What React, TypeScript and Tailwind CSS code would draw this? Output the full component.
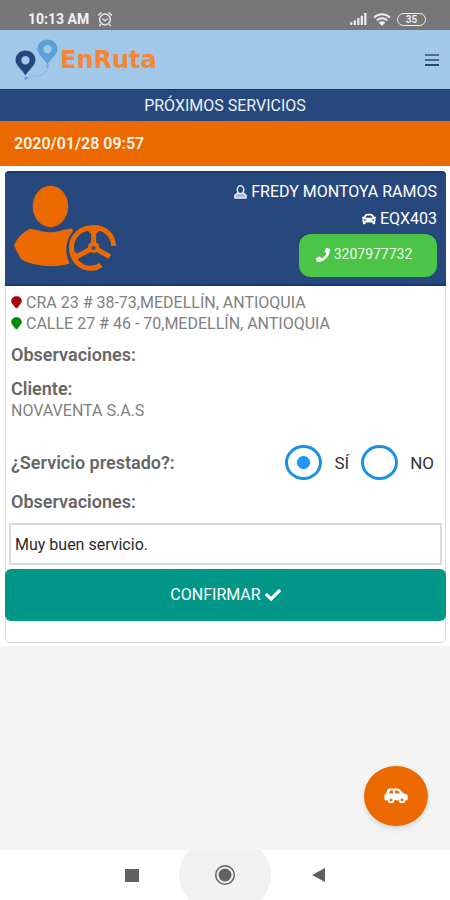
import { useState } from 'react';
import { FaCar, FaCheck, FaPhone } from 'react-icons/fa';

function AlarmIcon() {
  return (
    <svg viewBox="0 0 16 16" className="h-4 w-4" fill="none" stroke="#e8e8e8" strokeWidth="1.5" strokeLinecap="round">
      <circle cx="8" cy="8.5" r="5.4" />
      <path d="M1.5 4 4 1.8M14.5 4 12 1.8M3.6 13.8l-1 1M12.4 13.8l1 1" />
      <path d="m5.8 8 2.2 1.8L10.6 8" strokeWidth="1.2" />
    </svg>
  );
}

function SignalIcon() {
  return (
    <svg viewBox="0 0 18 13" className="h-3 w-[17px]" fill="#ececec">
      <rect x="0" y="10" width="2.4" height="3" />
      <rect x="3.8" y="8" width="2.4" height="5" />
      <rect x="7.6" y="5.5" width="2.4" height="7.5" />
      <rect x="11.4" y="3" width="2.4" height="10" />
      <rect x="15.2" y="0" width="2.4" height="13" />
    </svg>
  );
}

function WifiIcon() {
  return (
    <svg viewBox="0 0 18 13" className="h-[13px] w-[18px]" fill="none" stroke="#ececec" strokeWidth="2">
      <path d="M1 4.6a11.5 11.5 0 0 1 16 0" />
      <path d="M3.8 7.4a7.4 7.4 0 0 1 10.4 0" />
      <path d="M9 13 5.6 9.6a4.8 4.8 0 0 1 6.8 0z" fill="#ececec" stroke="none" />
    </svg>
  );
}

function StatusBar() {
  return (
    <div className="flex h-[30px] items-center justify-between bg-[#777777] pt-2 pr-6 pl-7 text-white">
      <div className="flex items-center gap-2">
        <span className="text-sm font-bold text-[#f2f2f2]">10:13 AM</span>
        <AlarmIcon />
      </div>
      <div className="flex items-center gap-[6px]">
        <SignalIcon />
        <WifiIcon />
        <span className="flex h-[13px] w-[29px] items-center justify-center rounded-full border border-[#f0f0f0] text-[10px] font-bold text-[#ececec]">
          35
        </span>
      </div>
    </div>
  );
}

function LogoPins() {
  return (
    <svg viewBox="0 0 44 42" className="h-[42px] w-[46px]">
      <path
        fillRule="evenodd"
        fill="#25467b"
        d="M10.5 11.5C4.9 11.5.5 15.7.5 21c0 5.4 6.5 9.5 10 15.5C14 30.5 20.5 26.4 20.5 21c0-5.3-4.4-9.5-10-9.5zm0 5.5a4.2 4.2 0 1 1 0 8.4 4.2 4.2 0 0 1 0-8.4z"
      />
      <path
        fillRule="evenodd"
        fill="#5ba1d7"
        d="M32.5.5c-5.6 0-10 4.2-10 9.5 0 5.4 6.5 9.5 10 15.5 3.5-6 10-10.1 10-15.5 0-5.3-4.4-9.5-10-9.5zm0 5.5a4.2 4.2 0 1 1 0 8.4 4.2 4.2 0 0 1 0-8.4z"
      />
      <path d="M11 39c6-2 11-2 15-3s7-4 6.500-9" fill="none" stroke="#7fa9d2" strokeWidth="1" strokeDasharray="2 1.5" />
      <circle cx="11" cy="39.3" r="1.6" fill="#6f9bc9" />
      <circle cx="32.5" cy="27" r="1.4" fill="#6fabdc" />
    </svg>
  );
}

function DriverIcon() {
  return (
    <svg viewBox="40 76 308 260" className="h-[87px] w-[103px]" fill="#ec6900">
      <ellipse cx="149" cy="140" rx="53" ry="62" />
      <path d="M40 256c10-22 30-42 50-49 20 3 35 11 62 10 25-1 40-10 63-11l1 9c-22 26-26 66-9 95-26 10-70 11-101 4-20-4-34-9-44-16-9-12-15-27-22-42z" />
      <g fill="none" stroke="#ec6900">
        <path d="M338 258c-1-33-27-55-60-55-38 0-66 25-66 60 0 37 26 62 57 62 12 0 22-3 31-10" strokeWidth="15" />
        <path d="M278 208v50M272 266l-46 25M284 266l42 24" strokeWidth="15" />
        <path d="M260 207l18 15 18-15M221 278l10 18M325 282l-5 12" strokeWidth="9" />
      </g>
      <circle cx="278" cy="262" r="17" />
      <circle cx="278" cy="264" r="6" fill="#27487c" />
      <circle cx="278" cy="264" r="2" />
    </svg>
  );
}

function UserOutlineIcon() {
  return (
    <svg viewBox="0 0 13 14" className="h-[14px] w-[13px]" fill="none" stroke="#e6ebf3" strokeWidth="1.5" strokeLinejoin="round">
      <path d="M4 7.8.9 10.3V13h11.2v-2.7L9 7.8z" fill="#a9b7cf" />
      <ellipse cx="6.5" cy="4.7" rx="3.2" ry="3.9" fill="#27487c" />
    </svg>
  );
}

function MarkerIcon({ color }: { color: string }) {
  return (
    <svg viewBox="0 0 11 13" className="h-[13px] w-[11px] shrink-0" fill={color}>
      <path d="M5.5.3C2.4.3.2 2.4.2 5c0 2.400 2.600 3.900 3.900 6.300.5 1.400 2.300 1.400 2.800 0C8.200 8.900 10.800 7.400 10.800 5 10.800 2.400 8.600.3 5.500.3z" />
    </svg>
  );
}

function CarIcon() {
  return (
    <svg viewBox="0 0 24 16" className="h-4 w-6">
      <path
        fillRule="evenodd"
        fill="#ffffff"
        d="M5.5.5h8c1 0 1.700.3 2.400 1L19.500 5.500l2.200.6c1.300.4 2 1.200 2 2.500v2.600c0 .6-.4 1-1 1h-1.300a3.400 3.400 0 0 1-6.700 0H10.300a3.400 3.400 0 0 1-6.700 0H1.500c-.6 0-1-.4-1-1V7.500c0-1 .6-1.800 1.500-2.100L3.400 2C3.800 1 4.500.5 5.500.5zM6.300 2.500 5 5.500h4v-3zm4.700 0v3h5.200l-2.500-3z"
      />
      <circle cx="7" cy="12" r="3.2" fill="#ffffff" />
      <circle cx="18" cy="12" r="3.2" fill="#ffffff" />
      <circle cx="7" cy="12" r="1.5" fill="#ec6900" />
      <circle cx="18" cy="12" r="1.5" fill="#ec6900" />
    </svg>
  );
}

const answers = ['SÍ', 'NO'];

const places = [
  { color: '#a80710', text: 'CRA 23 # 38-73,MEDELLÍN, ANTIOQUIA' },
  { color: '#078a0b', text: 'CALLE 27 # 46 - 70,MEDELLÍN, ANTIOQUIA' },
];

function ServiceCard() {
  const [answer, setAnswer] = useState('SÍ');
  const [notes, setNotes] = useState('Muy buen servicio.');

  return (
    <section className="rounded border border-[#dcdcdc] bg-white pb-[21px]">
      <div className="-mx-px -mt-px flex items-start justify-between rounded-t border-t-2 border-b-2 border-[#173a70] bg-[#27487c] px-[9px] pt-[7px] pb-[7px] text-white">
        <div className="pt-[5px]">
          <DriverIcon />
        </div>
        <div className="flex flex-col items-end">
          <p className="flex items-center gap-1 text-base leading-6">
            <UserOutlineIcon />
            FREDY MONTOYA RAMOS
          </p>
          <p className="flex items-center gap-1 pt-[3px] text-base leading-6">
            <FaCar className="h-[14px] w-[14px]" />
            EQX403
          </p>
          <a
            href="tel:3207977732"
            className="mt-[3px] flex h-[43px] w-[138px] items-start justify-center gap-1 rounded-xl bg-[#4bc447] pt-[10px] pr-2 text-sm text-[#e9f9e8]"
          >
            <FaPhone className="mt-1 h-[14px] w-[14px] text-white" />
            3207977732
          </a>
        </div>
      </div>

      <div className="px-[5px] pt-[6px] text-[#666666]">
        {places.map((p) => (
          <p key={p.color} className="flex items-center gap-1 text-base leading-[21px] text-[#808080]">
            <MarkerIcon color={p.color} />
            {p.text}
          </p>
        ))}
        <h2 className="pt-[10px] text-lg leading-[22px] font-semibold">Observaciones:</h2>
        <h2 className="pt-3 text-lg leading-[22px] font-semibold">Cliente:</h2>
        <p className="text-base leading-[21px] text-[#808080]">NOVAVENTA S.A.S</p>

        <div role="radiogroup" aria-labelledby="served" className="flex items-center justify-between pt-6">
          <span id="served" className="text-lg font-semibold">
            ¿Servicio prestado?:
          </span>
          <div className="flex items-center gap-3 pr-[6px]">
            {answers.map((a) => (
              <label key={a} className="flex items-center gap-3 text-[17px] leading-6 text-[#333333]">
                <input
                  type="radio"
                  name="prestado"
                  value={a}
                  checked={answer === a}
                  onChange={() => setAnswer(a)}
                  className="h-[35px] w-[37px] appearance-none rounded-[50%] border-3 border-[#1b8fe0] bg-white bg-[radial-gradient(circle,#2196f3_6px,transparent_7px)] not-checked:bg-none"
                />
                {a}
              </label>
            ))}
          </div>
        </div>

        <label htmlFor="notes" className="block pt-3 text-lg leading-[20px] font-semibold">
          Observaciones:
        </label>
      </div>
      <div className="px-[3px] pt-[11px]">
        <input
          id="notes"
          type="text"
          value={notes}
          onChange={(e) => setNotes(e.target.value)}
          className="h-[42px] w-full border-2 border-[#dadada] bg-white px-1 text-base text-[#2a2a2a]"
        />
      </div>
      <button
        type="button"
        className="mt-1 -mr-px -ml-px flex h-[52px] w-[calc(100%+2px)] items-center justify-center gap-1 rounded-md bg-[#009688] text-base text-white"
      >
        CONFIRMAR
        <FaCheck className="h-4 w-4" />
      </button>
    </section>
  );
}

function NavBar() {
  return (
    <nav className="flex h-[50px] items-center justify-center overflow-hidden bg-white">
      <button type="button" aria-label="Recientes" className="flex h-full w-[94px] items-center justify-center">
        <span className="h-[13px] w-[14px] bg-[#616161]" />
      </button>
      <button
        type="button"
        aria-label="Inicio"
        className="flex h-20 w-[92px] shrink-0 items-center justify-center rounded-[50%] bg-[#f1f1f1]"
      >
        <svg viewBox="0 0 22 22" className="h-[22px] w-[22px]">
          <circle cx="11" cy="11" r="9.3" fill="none" stroke="#616161" strokeWidth="1.5" />
          <circle cx="11" cy="11" r="6.5" fill="#616161" />
        </svg>
      </button>
      <button type="button" aria-label="Atrás" className="flex h-full w-[94px] items-center justify-center">
        <svg viewBox="0 0 13 14" className="h-[14px] w-[13px]" fill="#616161">
          <path d="M13 0v14L0 7z" />
        </svg>
      </button>
    </nav>
  );
}

export default function App() {
  return (
    <div className="flex min-h-screen flex-col bg-[#f4f4f4] font-['Roboto',sans-serif]">
      <StatusBar />
      <header className="flex h-[59px] items-center justify-between bg-[#a2c8e9] pr-[11px] pl-[14px]">
        <div className="flex items-center">
          <LogoPins />
          <span className="font-['DejaVu_Sans',sans-serif] text-2xl font-bold text-[#f58634]">EnRuta</span>
        </div>
        <button type="button" aria-label="Menú" className="flex w-[14px] flex-col gap-[3px]">
          <span className="h-[2px] bg-[#4b6a84]" />
          <span className="h-[2px] bg-[#4b6a84]" />
          <span className="h-[2px] bg-[#2c4a66]" />
        </button>
      </header>
      <h1 className="h-8 border-t border-[#1d3d70] bg-[#27487c] text-center text-base leading-8 text-[#eef2f8]">
        PRÓXIMOS SERVICIOS
      </h1>
      <div className="h-[45px] bg-[#ec6900] px-[14px] text-base leading-[46px] font-semibold text-[#fff3e8]">
        2020/01/28 09:57
      </div>
      <main className="bg-white pt-[5px] pr-1 pb-[3px] pl-[5px]">
        <ServiceCard />
      </main>
      <div className="flex flex-1 items-end justify-end pr-[22px] pb-6">
        <button
          type="button"
          aria-label="Vehículo"
          className="flex h-[60px] w-16 items-center justify-center rounded-[50%] bg-[#ec6900] text-white shadow-md"
        >
          <CarIcon />
        </button>
      </div>
      <NavBar />
    </div>
  );
}
